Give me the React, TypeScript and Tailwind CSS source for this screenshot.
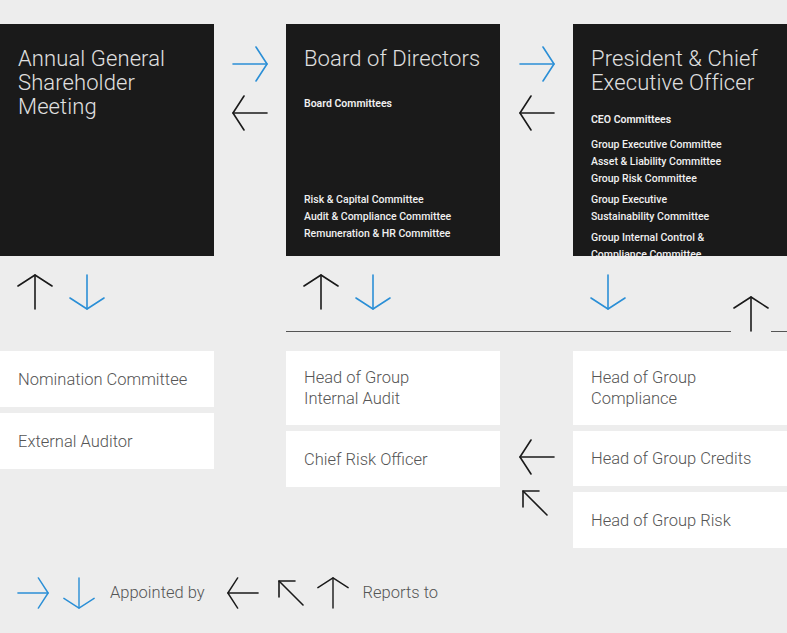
import React from "react";

const BLUE = "#2b8fd6";
const BLACK = "#1a1a1a";

function Arrow({ dir, color, size = 36 }: { dir: "r" | "l" | "u" | "d" | "nw"; color: string; size?: number }) {
  const rot = { r: 0, d: 90, l: 180, u: 270, nw: 225 }[dir];
  return (
    <svg width={size} height={size} viewBox="0 0 36 36" style={{ transform: `rotate(${rot}deg)` }}>
      <g fill="none" stroke={color} strokeWidth="1.6" strokeLinecap="round" strokeLinejoin="round">
        <path d="M1 18 H35" />
        <path d="M24 1 L35 18 L24 35" />
      </g>
    </svg>
  );
}
function NW({ color }: { color: string }) {
  return (
    <svg width="28" height="28" viewBox="0 0 28 28">
      <g fill="none" stroke={color} strokeWidth="1.6" strokeLinecap="round" strokeLinejoin="round">
        <path d="M2 2 L26 26" />
        <path d="M2 18 V2 H18" />
      </g>
    </svg>
  );
}

const Dark = ({ children }: { children: React.ReactNode }) => (
  <div className="w-[214px] h-[232px] bg-[#1a1a1a] px-[18px] pt-[23px] pb-[14px] flex flex-col text-[#e4e4e4]">{children}</div>
);
const Title = ({ children }: { children: React.ReactNode }) => (
  <div className="text-[22px] leading-[24px] font-light tracking-[0.1px] text-[#e0e0e0]">{children}</div>
);
const Small = ({ children, cls = "" }: { children: React.ReactNode; cls?: string }) => (
  <div className={"text-[10.5px] leading-[17px] font-medium text-[#f0f0f0] " + cls}>{children}</div>
);
const White = ({ h, children }: { h: number; children: React.ReactNode }) => (
  <div className="w-full bg-white px-[18px] flex items-center text-[16.5px] leading-[21px] font-light text-[#555]" style={{ height: h }}>
    {children}
  </div>
);

export default function App() {
  return (
    <div className="w-[787px] h-[633px] bg-[#ededed] overflow-hidden" style={{ fontFamily: "Roboto, 'Noto Sans', sans-serif" }}>
      <div className="flex pt-[24px]">
        <Dark>
          <Title>Annual General<br />Shareholder<br />Meeting</Title>
        </Dark>
        <div className="w-[72px] flex flex-col items-center pt-[22px] gap-[13px]">
          <Arrow dir="r" color={BLUE} />
          <Arrow dir="l" color={BLACK} />
        </div>
        <Dark>
          <Title>Board of Directors</Title>
          <Small cls="mt-[24px] font-semibold">Board Committees</Small>
          <div className="mt-auto">
            <Small>Risk &amp; Capital Committee</Small>
            <Small>Audit &amp; Compliance Committee</Small>
            <Small>Remuneration &amp; HR Committee</Small>
          </div>
        </Dark>
        <div className="w-[73px] flex flex-col items-center pt-[22px] gap-[13px]">
          <Arrow dir="r" color={BLUE} />
          <Arrow dir="l" color={BLACK} />
        </div>
        <Dark>
          <Title>President &amp; Chief<br />Executive Officer</Title>
          <Small cls="mt-[16px] font-semibold">CEO Committees</Small>
          <div className="mt-[8px] leading-[16px]">
            <Small cls="leading-[16px]">Group Executive Committee</Small>
            <Small cls="leading-[16px]">Asset &amp; Liability Committee</Small>
            <Small cls="leading-[16px]">Group Risk Committee</Small>
            <Small cls="leading-[13px] mt-[4px]">Group Executive<br />Sustainability Committee</Small>
            <Small cls="leading-[13px] mt-[4px]">Group Internal Control &amp;<br />Compliance Committee</Small>
          </div>
        </Dark>
      </div>

      <div className="flex h-[76px]">
        <div className="w-[286px] flex gap-[16px] pl-[17px] pt-[18px]">
          <Arrow dir="u" color={BLACK} />
          <Arrow dir="d" color={BLUE} />
        </div>
        <div className="flex-1 flex border-b border-[#555]">
          <div className="w-[287px] flex gap-[16px] pl-[17px] pt-[18px]">
            <Arrow dir="u" color={BLACK} />
            <Arrow dir="d" color={BLUE} />
          </div>
          <div className="flex-1 flex">
            <div className="pl-[17px] pt-[18px]">
              <Arrow dir="d" color={BLUE} />
            </div>
            <div className="ml-auto mr-[16px] pt-[40px] bg-[#ededed] -mb-[2px] px-[2px]">
              <Arrow dir="u" color={BLACK} />
            </div>
          </div>
        </div>
      </div>

      <div className="flex pt-[19px]">
        <div className="w-[214px] flex flex-col gap-[6px]">
          <White h={56}>Nomination Committee</White>
          <White h={56}>External Auditor</White>
        </div>
        <div className="w-[72px]" />
        <div className="w-[214px] flex flex-col gap-[6px]">
          <White h={74}>Head of Group<br />Internal Audit</White>
          <White h={56}>Chief Risk Officer</White>
        </div>
        <div className="w-[73px] flex flex-col items-center">
          <div className="h-[88px]" />
          <Arrow dir="l" color={BLACK} />
          <div className="mt-[14px] -ml-[4px]"><NW color={BLACK} /></div>
        </div>
        <div className="w-[214px] flex flex-col gap-[6px]">
          <White h={74}>Head of Group<br />Compliance</White>
          <White h={55}>Head of Group Credits</White>
          <White h={56}>Head of Group Risk</White>
        </div>
      </div>

      <div className="flex items-center mt-[29px] pl-[17px] text-[16.5px] font-light text-[#555]">
        <Arrow dir="r" color={BLUE} size={32} />
        <div className="ml-[14px]"><Arrow dir="d" color={BLUE} size={32} /></div>
        <span className="ml-[15px]">Appointed by</span>
        <div className="ml-[22px]"><Arrow dir="l" color={BLACK} size={32} /></div>
        <div className="ml-[18px]"><NW color={BLACK} /></div>
        <div className="ml-[12px]"><Arrow dir="u" color={BLACK} size={32} /></div>
        <span className="ml-[14px]">Reports to</span>
      </div>
    </div>
  );
}
